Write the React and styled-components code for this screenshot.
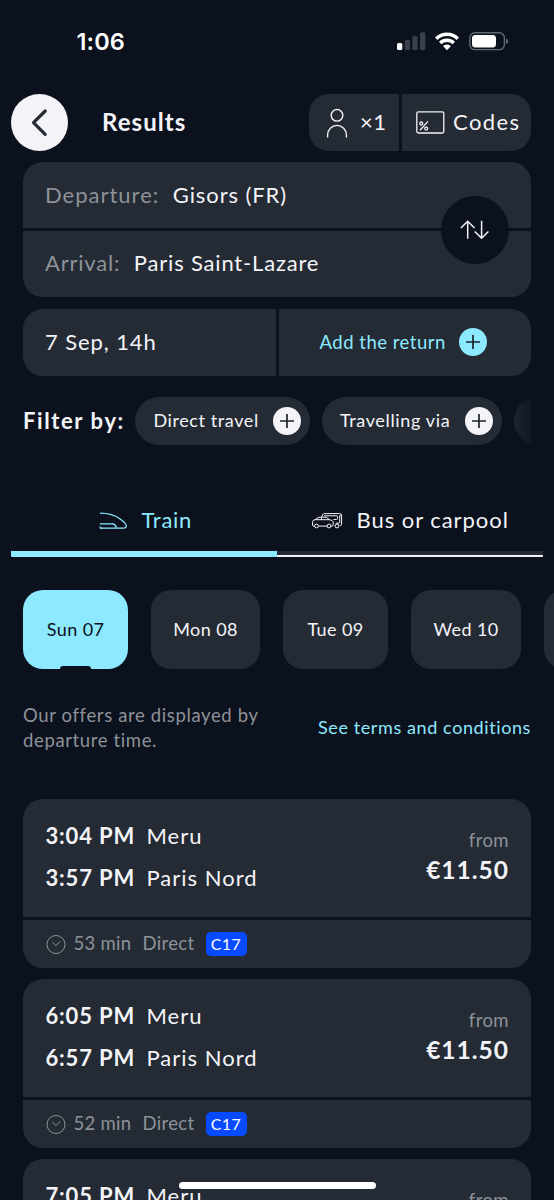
import styled, { createGlobalStyle, css } from "styled-components";

const GlobalStyle = createGlobalStyle`
    * {
        box-sizing: border-box;
    }

    body {
        margin: 0;
        background-color: #0b111d;
    }

    button {
        font: inherit;
        color: inherit;
        border: none;
        background: none;
        padding: 0;
        letter-spacing: inherit;
    }
`

const Screen = styled.div`
    position: relative;
    width: 554px;
    height: 1200px;
    overflow: hidden;
    background-color: #0b111d;
    color: #f4f4f8;
    font-family: Lato, "Open Sans", sans-serif;
    font-size: 22px;
    white-space: nowrap;
`

/* Every label sets its own size and tracking */
const Label = styled.span`
    font-size: ${(props) => props.$size || 22}px;
    font-weight: ${(props) => props.$weight || 400};
    letter-spacing: ${(props) => props.$track || 0}px;
    color: ${(props) => props.$color || "inherit"};
    line-height: 1.2;
`

const StatusBar = styled.div`
    height: 94px;
    padding: 28px 45px 0 76.5px;
    display: flex;
    justify-content: space-between;
    align-items: flex-start;

    .time {
        font-family: Inter, sans-serif;
        font-weight: 600;
        font-size: 23.5px;
        line-height: 28px;
        letter-spacing: 0.1px;
        color: white;
    }

    svg {
        display: block;
        margin-top: 3px;
    }
`

const Header = styled.header`
    height: 57px;
    padding: 0 23px 0 11px;
    display: flex;
    align-items: center;
`

const BackButton = styled.button`
    width: 57px;
    height: 57px;
    border-radius: 50%;
    background-color: #f4f4f8;
    margin-right: 34px;

    svg {
        display: block;
    }
`

const HeaderActions = styled.div`
    margin-left: auto;
    display: flex;
    gap: 3px;
`

const ActionButton = styled.button`
    height: 57px;
    width: ${(props) => props.$width}px;
    padding-left: ${(props) => props.$pad}px;
    display: flex;
    align-items: center;
    gap: ${(props) => props.$gap}px;
    background-color: #242b35;
    border-radius: ${(props) => (props.$side === "left" ? "20px 0 0 20px" : "0 20px 20px 0")};
`

const SearchCard = styled.section`
    position: relative;
    margin: 11px 23px 0;
    display: flex;
    flex-direction: column;
    gap: 3px;
    border-radius: 20px;
    overflow: hidden;
`

const SearchRow = styled.div`
    height: 66px;
    padding: 0 0 ${(props) => props.$lift || 0}px 22px;
    display: flex;
    align-items: center;
    gap: 13.5px;
    background-color: #242b35;
`

const SwapButton = styled.button`
    position: absolute;
    right: 22px;
    top: 34px;
    width: 68px;
    height: 68px;
    border-radius: 50%;
    background-color: #0b111d;

    svg {
        display: block;
    }
`

const DateCard = styled.section`
    margin: 12px 23px 0;
    height: 67px;
    display: grid;
    grid-template-columns: 1fr 1fr;
    gap: 3px;
    border-radius: 20px;
    overflow: hidden;
`

const DateCell = styled.div`
    padding: 0 0 1px ${(props) => props.$pad}px;
    display: flex;
    align-items: center;
    gap: 13.5px;
    background-color: #242b35;
`

const PlusCircle = styled.span`
    width: 28px;
    height: 28px;
    flex: none;
    border-radius: 50%;
    background-color: ${(props) => props.$color || "#f4f4f8"};

    svg {
        display: block;
    }
`

const Filters = styled.section`
    margin: 21px 23px 0;
    height: 48px;
    display: flex;
    align-items: center;
    overflow: hidden;

    .title {
        width: 112.4px;
        flex: none;
    }
`

const Pill = styled.button`
    width: ${(props) => props.$width}px;
    height: 48px;
    flex: none;
    margin-right: 11.5px;
    padding: 0 9.5px 0 18px;
    display: flex;
    align-items: center;
    justify-content: space-between;
    border-radius: 24px;
    background: ${(props) => (props.$faded ? "linear-gradient(90deg, #1d242e, #0f1621 18px)" : "#242b35")};
`

const Tabs = styled.nav`
    margin: 41px 11px 0;
    display: grid;
    grid-template-columns: 1fr 1fr;
`

const Tab = styled.button`
    height: 71px;
    padding: 0 0 0 ${(props) => props.$pad}px;
    display: flex;
    align-items: center;
    gap: 13.5px;
    border-bottom: 2px solid #f4f4f8;
    box-shadow: inset 0 -4px #242b35;
    border-radius: 0 0 1px 0;

    ${(props) =>
        props.$active &&
        css`
            padding-bottom: 2px;
            color: #8de9ff;
            border: none;
            box-shadow: inset 0 -6px #8de9ff;
            border-radius: 0 0 1px 1px;
        `}

    svg {
        flex: none;
    }
`

const Days = styled.section`
    margin: 33px 0 0 23px;
    display: flex;
    gap: 22.8px;
`

const Day = styled.button`
    width: ${(props) => props.$width}px;
    height: 79px;
    flex: none;
    display: flex;
    flex-direction: column;
    align-items: center;
    justify-content: center;
    border-radius: 20px;
    background-color: ${(props) => (props.$active ? "#8de9ff" : "#242b35")};
    color: ${(props) => (props.$active ? "#0b111d" : "#f4f4f8")};

    ${(props) =>
        props.$active &&
        css`
            &::before {
                content: "";
                height: 3px;
                margin-bottom: auto;
            }

            &::after {
                content: "";
                width: 31px;
                height: 3px;
                margin-top: auto;
                border-radius: 3px 3px 0 0;
                background-color: #0b111d;
            }
        `}
`

const Notice = styled.section`
    margin: 33px 23px 0;
    height: 51px;
    display: flex;
    align-items: center;
    justify-content: space-between;

    p {
        margin: 1px 0 0;
        line-height: 25.5px;
    }
`

const Offers = styled.main`
    margin: 46px 23px 0;
    display: flex;
    flex-direction: column;
    gap: 11.5px;
`

const Offer = styled.article`
    display: flex;
    flex-direction: column;
    gap: 2.5px;
    border-radius: 20px;
    overflow: hidden;
`

const OfferBody = styled.div`
    height: 118px;
    padding: 16px 22px 0 22.5px;
    display: flex;
    justify-content: space-between;
    background-color: #242b35;
`

const Stop = styled.div`
    height: 42px;
    display: grid;
    grid-template-columns: 101px auto;
    align-items: center;
`

const Price = styled.div`
    display: flex;
    flex-direction: column;
    align-items: flex-end;
    gap: 4px;
    padding-top: 14px;
`

const OfferFooter = styled.div`
    height: 48px;
    padding-left: 23px;
    display: flex;
    align-items: center;
    background-color: #242b35;

    svg {
        margin-right: 7.5px;
    }

    .duration {
        width: 69px;
    }

    .kind {
        width: 63px;
    }
`

const Line = styled.span`
    width: 41px;
    height: 24px;
    display: flex;
    align-items: center;
    justify-content: center;
    border-radius: 5px;
    background-color: #064bff;
    color: white;
`

const HomeIndicator = styled.div`
    position: absolute;
    left: 179px;
    bottom: 11px;
    width: 197px;
    height: 7px;
    border-radius: 4px;
    background-color: white;
`

const muted = "#8e9299";

const days = [
    { name: "Sun 07", width: 105.2, active: true },
    { name: "Mon 08", width: 109.2 },
    { name: "Tue 09", width: 105.2 },
    { name: "Wed 10", width: 110.2 },
    { name: "", width: 107 },
];

const offers = [
    { start: "3:04 PM", from: "Meru", end: "3:57 PM", to: "Paris Nord", price: "€11.50", duration: "53 min", line: "C17" },
    { start: "6:05 PM", from: "Meru", end: "6:57 PM", to: "Paris Nord", price: "€11.50", duration: "52 min", line: "C17" },
    { start: "7:05 PM", from: "Meru" },
];

function StatusIcons() {
    return (
        <svg width="112" height="22" viewBox="397 31 112 22" fill="white">
            <rect x="397" y="43" width="5.3" height="7" rx="1.5" />
            <g fill="#3a404b">
                <rect x="404.8" y="40" width="5.3" height="10" rx="1.5" />
                <rect x="412.4" y="36" width="5.3" height="14" rx="1.5" />
                <rect x="420" y="32.3" width="5.3" height="17.7" rx="1.5" />
            </g>
            <g fill="none" stroke="white" strokeWidth="3.4">
                <path d="M436.2 38.7a15.4 15.4 0 0 1 21.6 0" />
                <path d="M440.2 43a9.6 9.6 0 0 1 13.6 0" />
            </g>
            <path d="M447 50.2l-4-4.1a5.7 5.7 0 0 1 8 0z" />
            <rect x="469.8" y="32.8" width="34.6" height="16.8" rx="5" fill="none" stroke="#646973" strokeWidth="1.4" />
            <rect x="472" y="35" width="24" height="12.4" rx="3.4" />
            <path d="M506 38.4q2.2 .8 2.2 2.8t-2.2 2.8z" fill="#646973" />
        </svg>
    )
}

function Plus() {
    return (
        <svg width="28" height="28" viewBox="0 0 28 28" fill="none" stroke="#1c222c" strokeWidth="1.7">
            <path d="M14 7v14M7 14h14" />
        </svg>
    )
}

function TrainIcon() {
    return (
        <svg width="29" height="18" viewBox="0 0 29 18" fill="none" stroke="currentColor" strokeWidth="1.2">
            <path d="M1 1.2c9 0 15.5 2.3 20.5 6c4.2 3 5.8 4.8 5.8 6.8q0 2.2-2.8 2.2H.8" />
            <path d="M.8 11.8h12.7q2.8 0 3.7 4.2M.8 14.3q.5 2 2 2M13.5 11.8q4 .7 3.7 4.4" />
        </svg>
    )
}

function BusIcon() {
    return (
        <svg width="31" height="16" viewBox="0 0 31 16" fill="none" stroke="currentColor" strokeWidth="1">
            <path d="M9.5 4.2l1.5-3q.3-.6 1.2-.6h15.5q1.8 0 1.9 1.7v9q0 1.3-1.5 1.5M12 2.8h12.5q1 0 1 1v1.7q0 1-1 1h-3M29.5 2.7h-1.8v6.5q0 1-1 1h-3" />
            <path d="M3 6.7l3-2q.7-.5 2-.5h5q1.3 0 2.2.7l2.5 1.9q3 .3 3.5 2v3q0 1.3-1.5 1.3h-1M15 13.1H6.5M2.5 13.1H1.3q-.7 0-.7-1V8.7q0-1.5 2.4-2h14.7M9.5 4.4v2.3" />
            <circle cx="4.5" cy="13" r="1.9" />
            <circle cx="17" cy="13" r="1.9" />
            <circle cx="25" cy="13" r="1.9" />
        </svg>
    )
}

function ClockIcon() {
    return (
        <svg width="20" height="20" viewBox="0 0 20 20" fill="none" stroke={muted} strokeWidth="1">
            <circle cx="10" cy="10.5" r="9" />
            <path d="M6.2 8l3.7 3.6 4.5-4.3" />
        </svg>
    )
}

function OfferStop({ time, station }) {
    return (
        <Stop>
            <Label $weight={700} $track={0.85}>{time}</Label>
            <Label $track={1}>{station}</Label>
        </Stop>
    )
}

function OfferCard({ offer }) {
    return (
        <Offer>
            <OfferBody>
                <div>
                    <OfferStop time={offer.start} station={offer.from} />
                    {offer.end && <OfferStop time={offer.end} station={offer.to} />}
                </div>
                <Price>
                    <Label $size={18.5} $track={0.4} $color={muted}>from</Label>
                    {offer.price && <Label $size={24.5} $weight={700} $track={1}>{offer.price}</Label>}
                </Price>
            </OfferBody>
            {offer.line && (
                <OfferFooter>
                    <ClockIcon />
                    <Label className="duration" $size={18.5} $track={0.3} $color={muted}>{offer.duration}</Label>
                    <Label className="kind" $size={18.5} $track={0.35} $color={muted}>Direct</Label>
                    <Line>
                        <Label $size={16} $track={0.4}>{offer.line}</Label>
                    </Line>
                </OfferFooter>
            )}
        </Offer>
    )
}

export default function App() {
    return (
        <Screen>
            <GlobalStyle />
            <StatusBar>
                <span className="time">1:06</span>
                <StatusIcons />
            </StatusBar>

            <Header>
                <BackButton aria-label="Back">
                    <svg width="57" height="57" viewBox="0 0 57 57" fill="none" stroke="#242b35" strokeWidth="3.2" strokeLinecap="round" strokeLinejoin="round">
                        <path d="M34.2 17L22.5 28.7L34.2 40.4" />
                    </svg>
                </BackButton>
                <Label $size={24} $weight={700} $track={1.05}>Results</Label>
                <HeaderActions>
                    <ActionButton $side="left" $width={90} $pad={17} $gap={12}>
                        <svg width="22" height="30" viewBox="0 0 22 30" fill="none" stroke="#f4f4f8" strokeWidth="1.4">
                            <circle cx="11" cy="7.3" r="5.8" />
                            <path d="M1.6 29.5v-2.7a9.4 9.4 0 0 1 18.8 0v2.7" />
                        </svg>
                        <Label $track={0.4}>×1</Label>
                    </ActionButton>
                    <ActionButton $side="right" $width={129} $pad={14} $gap={8}>
                        <svg width="29" height="23" viewBox="0 0 29 23" fill="none" stroke="#f4f4f8" strokeWidth="1.3">
                            <rect x=".8" y=".8" width="27" height="21.2" rx="1.5" />
                            <circle cx="5.3" cy="12.5" r="1.5" />
                            <circle cx="10.2" cy="17.6" r="1.5" />
                            <path d="M4 19.2l8-8.8" />
                        </svg>
                        <Label $track={1.4}>Codes</Label>
                    </ActionButton>
                </HeaderActions>
            </Header>

            <SearchCard>
                <SearchRow>
                    <Label $track={1} $color={muted}>Departure:</Label>
                    <Label $track={0.9}>Gisors (FR)</Label>
                </SearchRow>
                <SearchRow $lift={2}>
                    <Label $track={0.8} $color={muted}>Arrival:</Label>
                    <Label $track={0.82}>Paris Saint-Lazare</Label>
                </SearchRow>
                <SwapButton aria-label="Swap stations">
                    <svg width="68" height="68" viewBox="441 196 68 68" fill="none" stroke="#f4f4f8" strokeWidth="1.5">
                        <path d="M467.7 238.7V221.2M460.9 228l6.8-6.8 6.8 6.8M481.6 220.8v17.5M474.8 231.5l6.8 6.8 6.8-6.8" />
                    </svg>
                </SwapButton>
            </SearchCard>

            <DateCard>
                <DateCell $pad={22}>
                    <Label $track={0.9}>7 Sep, 14h</Label>
                </DateCell>
                <DateCell $pad={41}>
                    <Label $size={18.5} $track={0.5} $color="#8de9ff">Add the return</Label>
                    <PlusCircle $color="#8de9ff"><Plus /></PlusCircle>
                </DateCell>
            </DateCard>

            <Filters>
                <Label className="title" $weight={700} $track={1.6}>Filter by:</Label>
                <Pill $width={175}>
                    <Label $size={18} $track={0.6}>Direct travel</Label>
                    <PlusCircle><Plus /></PlusCircle>
                </Pill>
                <Pill $width={180.5}>
                    <Label $size={18} $track={0.65}>Travelling via</Label>
                    <PlusCircle><Plus /></PlusCircle>
                </Pill>
                <Pill $width={150} $faded aria-label="More filters" />
            </Filters>

            <Tabs>
                <Tab $active $pad={88}>
                    <TrainIcon />
                    <Label $track={0.75}>Train</Label>
                </Tab>
                <Tab $pad={35}>
                    <BusIcon />
                    <Label $track={0.95}>Bus or carpool</Label>
                </Tab>
            </Tabs>

            <Days>
                {days.map((day) => (
                    <Day key={day.name} $width={day.width} $active={day.active}>
                        <Label $size={18} $track={0.4}>{day.name}</Label>
                    </Day>
                ))}
            </Days>

            <Notice>
                <Label as="p" $size={18.5} $track={0.63} $color={muted}>Our offers are displayed by<br />departure time.</Label>
                <Label $size={18} $track={0.6} $color="#8de9ff">See terms and conditions</Label>
            </Notice>

            <Offers>
                {offers.map((offer) => (
                    <OfferCard key={offer.start} offer={offer} />
                ))}
            </Offers>

            <HomeIndicator />
        </Screen>
    )
}
